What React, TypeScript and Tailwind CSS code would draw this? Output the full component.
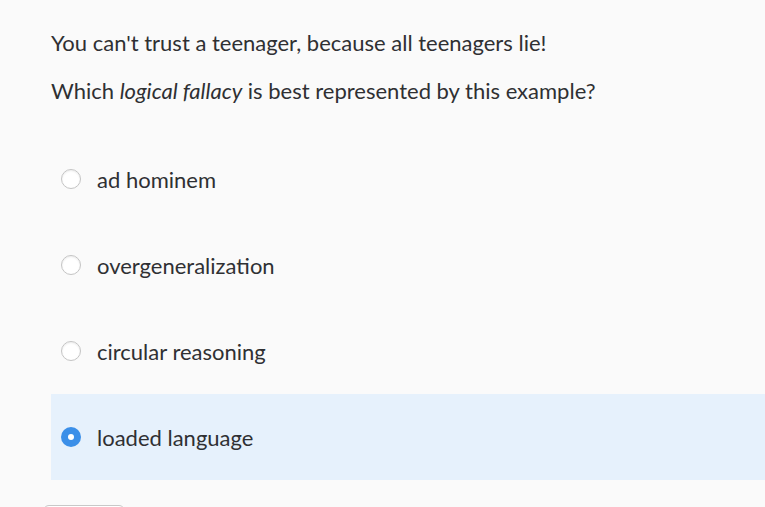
import React from 'react';

const options = ['ad hominem', 'overgeneralization', 'circular reasoning', 'loaded language'];

const Radio: React.FC<{ checked: boolean }> = ({ checked }) =>
  checked ? (
    <span className="flex h-5 w-5 items-center justify-center rounded-full bg-[#3b8fe8]">
      <span className="h-[6px] w-[6px] rounded-full bg-white" />
    </span>
  ) : (
    <span className="h-5 w-5 rounded-full border border-[#c4c4c4] bg-white shadow-[inset_0_1px_2px_rgba(0,0,0,0.08)]" />
  );

export default function App() {
  const selected = 3;
  return (
    <div className="h-[507px] w-[765px] overflow-hidden bg-[#fafafa] font-['Lato',sans-serif] text-[22px] text-[#2f3033]">
      <div className="pl-[51px] pt-[29px]">
        <p className="leading-[28px]">You can't trust a teenager, because all teenagers lie!</p>
        <p className="mt-[20px] leading-[28px]">
          Which <em>logical fallacy</em> is best represented by this example?
        </p>
        <div className="mt-[31px] flex flex-col">
          {options.map((o, i) => (
            <label
              key={o}
              className={`flex h-[86px] items-center gap-4 pl-[10px] ${i === selected ? 'bg-[#e6f1fc]' : ''}`}
            >
              <Radio checked={i === selected} />
              <span>{o}</span>
            </label>
          ))}
        </div>
        <button className="-ml-[8px] mt-[25px] h-9 w-[82px] rounded-md border border-[#c8c8c8] bg-white" />
      </div>
    </div>
  );
}
